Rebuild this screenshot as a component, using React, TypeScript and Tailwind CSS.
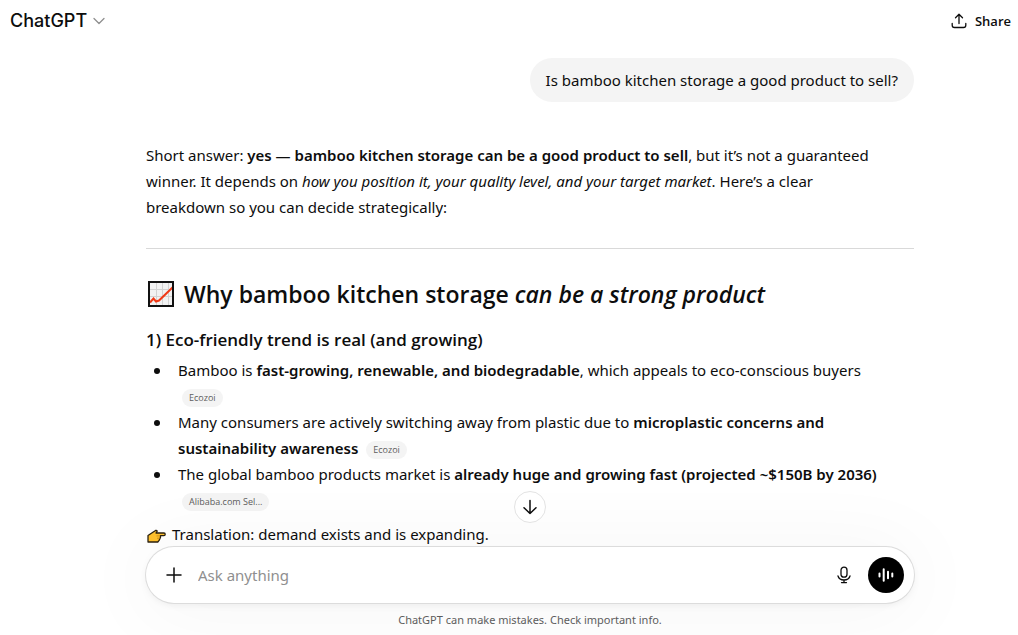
import React from "react";

const Chip = ({ children }: { children: React.ReactNode }) => (
  <a
    href="#"
    className="mx-1 inline-flex h-[18px] items-center rounded-full bg-[#f4f4f4] px-[7px] align-middle font-['Open_Sans',sans-serif] text-[9px] leading-none text-[#5d5d5d]"
  >
    {children}
  </a>
);

const Item = ({ children }: { children: React.ReactNode }) => (
  <li className="flex gap-[18px]">
    <span className="mt-[11px] h-1.5 w-1.5 shrink-0 rounded-full bg-[#0d0d0d]" />
    <div>{children}</div>
  </li>
);

const ChartIcon = () => (
  <svg className="h-7 w-7 shrink-0" viewBox="0 0 28 28" role="img" aria-label="Chart increasing">
    <rect x="3" y="2" width="25" height="25" fill="#f2f2f2" />
    <path d="M10.500 3v23M16.500 3v23M22.500 3v23M4 9.500h23M4 16.500h23" stroke="#d2d2d2" strokeWidth="1" fill="none" />
    <path d="M4 22.500l3.500-4 2.500 3 3-1L27 7" stroke="#f03a17" strokeWidth="2" fill="none" />
    <rect x="3" y="2" width="24" height="24" fill="none" stroke="#111" strokeWidth="2" />
  </svg>
);

const PointingIcon = () => (
  <svg className="mt-1 h-5 w-5 shrink-0" viewBox="0 0 20 20" role="img" aria-label="Pointing right">
    <path
      d="M2 9.500L6.500 6.500l3.500-2.300 1.300.8-1.300 2h8c1.600 0 1.600 2.600 0 2.600h-3.500v1.600l-.6 1.500-.8 1.700-1.300 1.600H2z"
      fill="#ffc12e"
      stroke="#2b2110"
      strokeWidth="1.300"
      strokeLinejoin="round"
    />
    <path d="M10.500 9.900h3.500M11 12.200h2.800" stroke="#b97c12" strokeWidth=".7" fill="none" />
  </svg>
);

const Header = () => (
  <header className="flex h-[41px] shrink-0 items-center justify-between pr-[7px] pl-2.5">
    <button type="button" className="flex items-center gap-1.5 font-['Inter',sans-serif] text-[18px] font-medium">
      ChatGPT
      <svg className="h-3 w-3 text-[#8f8f8f]" viewBox="0 0 12 12" fill="none" stroke="currentColor" strokeWidth="1.300">
        <path d="M1 3.500l5 5 5-5" strokeLinecap="round" strokeLinejoin="round" />
      </svg>
    </button>
    <button type="button" className="flex items-center gap-2 font-['Open_Sans',sans-serif] text-[13px] font-semibold">
      <svg className="h-4 w-4" viewBox="0 0 16 16" fill="none" stroke="currentColor" strokeWidth="1.300">
        <path
          d="M8 10.500V1.500M4.500 4.800L8 1.300l3.500 3.500M1.200 10.500v1.700c0 1.500.8 2.300 2.300 2.300h9c1.500 0 2.300-.8 2.300-2.300v-1.700"
          strokeLinecap="round"
          strokeLinejoin="round"
        />
      </svg>
      Share
    </button>
  </header>
);

const Conversation = () => (
  <main className="min-h-0 flex-1 overflow-y-auto pl-[42px] [scrollbar-width:none]">
    <div className="mx-auto max-w-3xl pt-[17px]">
      <div className="flex justify-end">
        <p className="rounded-[22px] bg-[#f4f4f4] px-4 py-[9px]">Is bamboo kitchen storage a good product to sell?</p>
      </div>

      <article className="pt-10">
        <p className="max-w-[744px]">
          Short answer: <strong className="font-semibold">yes — bamboo kitchen storage can be a good product to sell</strong>, but
          it’s not a guaranteed winner. It depends on <em>how you position it, your quality level, and your target market</em>.
          Here’s a clear breakdown so you can decide strategically:
        </p>

        <hr className="mt-7 mb-[29px] border-[#d9d9d9]" />

        <h2 className="flex items-center gap-2.5 font-['Open_Sans',sans-serif] text-[23px] leading-8 font-semibold">
          <ChartIcon />
          <span>
            Why bamboo kitchen storage <em>can be a strong product</em>
          </span>
        </h2>
        <h3 className="mt-4 font-['Open_Sans',sans-serif] text-[17px] leading-7 font-semibold">
          1) Eco-friendly trend is real (and growing)
        </h3>
        <ul className="mt-[3px] pl-2">
          <Item>
            Bamboo is <strong className="font-semibold">fast-growing, renewable, and biodegradable</strong>, which appeals to
            eco-conscious buyers
            <br />
            <Chip>Ecozoi</Chip>
          </Item>
          <Item>
            Many consumers are actively switching away from plastic due to{" "}
            <strong className="font-semibold">microplastic concerns and sustainability awareness</strong> <Chip>Ecozoi</Chip>
          </Item>
          <Item>
            The global bamboo products market is{" "}
            <strong className="font-semibold">already huge and growing fast (projected ~$150B by 2036)</strong>
            <br />
            <Chip>Alibaba.com Sel...</Chip>
          </Item>
        </ul>
        <p className="mt-2 flex items-center gap-1.5">
          <PointingIcon />
          Translation: demand exists and is expanding.
        </p>
      </article>
    </div>
  </main>
);

const Composer = () => (
  <footer className="relative shrink-0 pt-px pl-[42px]">
    <div className="relative mx-auto max-w-3xl">
      <button
        type="button"
        aria-label="Scroll to bottom"
        className="absolute bottom-full left-1/2 mb-6 flex h-8 w-8 -translate-x-1/2 items-center justify-center rounded-full border border-[#e3e3e3] bg-white"
      >
        <svg className="h-4 w-4" viewBox="0 0 16 16" fill="none" stroke="currentColor" strokeWidth="1.500">
          <path d="M8 1.500v13M2 8.800l6 5.700 6-5.700" strokeLinecap="round" strokeLinejoin="round" />
        </svg>
      </button>
      <form
        className="flex h-14 items-center rounded-full bg-white pr-2.5 pl-5 shadow-[0_0_0_1px_#dcdcdc,0_4px_80px_8px_rgba(0,0,0,0.04),0_3px_6px_rgba(0,0,0,0.05)]"
        onSubmit={(e) => e.preventDefault()}
      >
        <button type="button" aria-label="Add files" className="shrink-0">
          <svg className="h-4 w-4" viewBox="0 0 16 16" fill="none" stroke="currentColor" strokeWidth="1.500">
            <path d="M8 1v14M1 8h14" strokeLinecap="round" />
          </svg>
        </button>
        <input
          type="text"
          aria-label="Ask anything"
          placeholder="Ask anything"
          className="ml-4 min-w-0 flex-1 outline-none placeholder:text-[#8f8f8f]"
        />
        <button type="button" aria-label="Dictate" className="mr-[15px] shrink-0">
          <svg className="h-[18px] w-[18px]" viewBox="0 0 18 18" fill="none" stroke="currentColor" strokeWidth="1.300">
            <rect x="6" y="1.200" width="6" height="10" rx="3" />
            <path d="M3 10c.7 2.500 3 4 6 4s5.300-1.500 6-4M9 14v2.500M6.500 16.600h5" strokeLinecap="round" />
          </svg>
        </button>
        <button
          type="button"
          aria-label="Use voice"
          className="flex h-9 w-9 shrink-0 items-center justify-center rounded-full bg-black text-white"
        >
          <svg className="h-[18px] w-[18px]" viewBox="0 0 18 18" fill="none" stroke="currentColor" strokeWidth="2">
            <path d="M2.500 7.500v3M6.700 3.200v11.600M11 5.800v6.400M15.300 7.500v3" strokeLinecap="round" />
          </svg>
        </button>
      </form>
      <p className="flex h-8 items-center justify-center pt-px text-[11px] text-[#5d5d5d]">
        ChatGPT can make mistakes. Check important info.
      </p>
    </div>
  </footer>
);

const App = () => {
  return (
    <div className="flex h-screen flex-col bg-white font-['Noto_Sans','Open_Sans',sans-serif] text-[15px] leading-[26px] text-[#0d0d0d]">
      <Header />
      <Conversation />
      <Composer />
    </div>
  );
};

export default App;
